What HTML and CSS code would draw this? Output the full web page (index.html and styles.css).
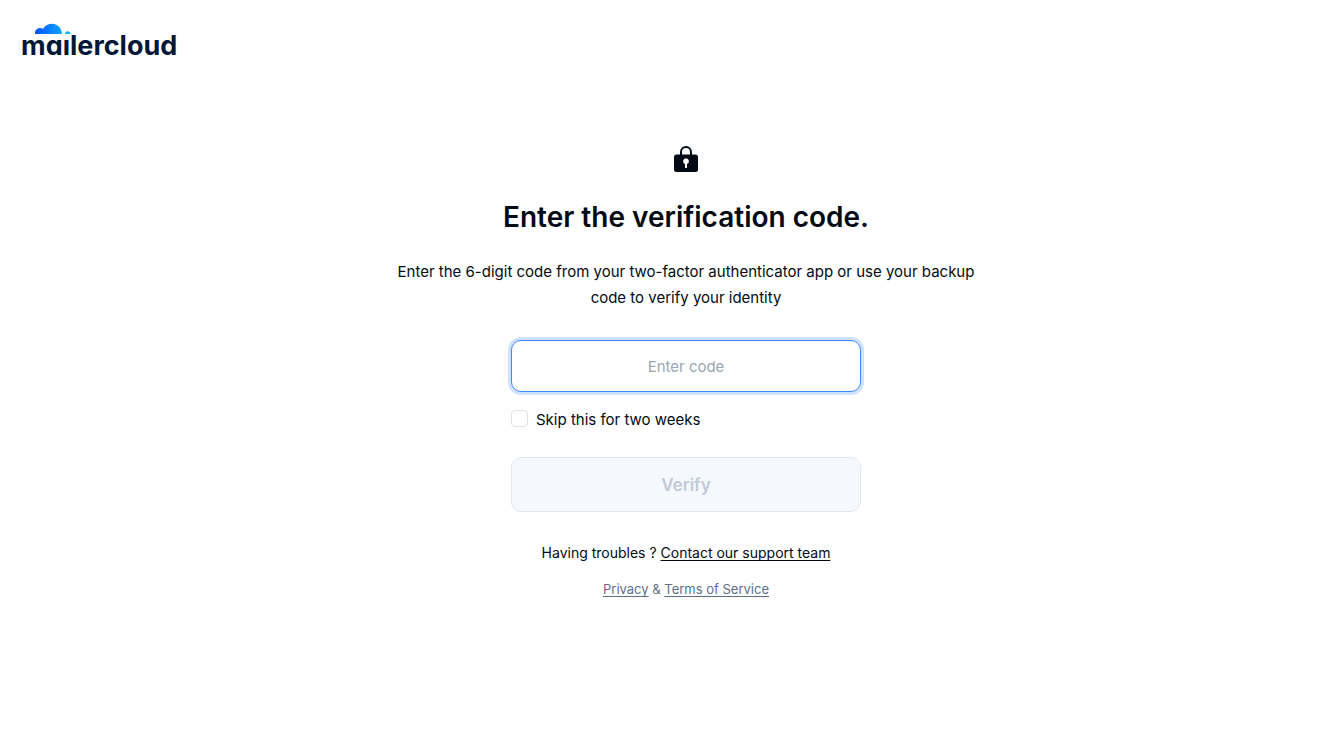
FILE: index.html
```html
<!DOCTYPE html>
<html lang="en">
<head>
<meta charset="utf-8">
<meta name="viewport" content="width=device-width, initial-scale=1">
<title>Mailercloud</title>
<link rel="stylesheet" href="styles.css">
</head>
<body>
<header class="header">
  <a class="brand" href="#" aria-label="mailercloud">
    <svg class="brand-logo" viewBox="-6 0 170 44" role="img" aria-hidden="true">
      <defs>
        <linearGradient id="cloud" x1="0" x2="1">
          <stop offset="0" stop-color="#0653ff"/>
          <stop offset="1" stop-color="#0aa5fc"/>
        </linearGradient>
      </defs>
      <text class="brand-name" x="-1" y="35">maılercloud</text>
      <path fill="url(#cloud)" d="M13 14C12.600 10.500 15 8 18 8Q20 8 21.200 8.800C23 5.600 26.500 3.800 30 3.800C35.500 3.800 39.500 8 40 14Z"/>
      <path fill="#16b7f6" d="M43 14a2.700 2.700 0 0 1 5.400 0z"/>
    </svg>
  </a>
</header>
<main class="main">
  <form class="verify">
    <svg class="lock" viewBox="0 0 24 27" aria-hidden="true">
      <path fill="none" stroke="#020b14" stroke-width="2" d="M7 9V6a5 5 0 0 1 10 0v3"/>
      <rect y="8.500" width="24" height="17.500" rx="2.500" fill="#020b14"/>
      <path fill="#fff" d="M12 12.200a3 3 0 0 1 1 5.800V22h-2v-4a3 3 0 0 1 1-5.800z"/>
    </svg>
    <h1 class="title">Enter the verification code.</h1>
    <p class="intro">Enter the 6-digit code from your two-factor authenticator app or use your backup code to verify your identity</p>
    <div class="fields">
      <input class="code" type="text" placeholder="Enter code" aria-label="Enter code" autofocus>
      <label class="skip"><input class="skip-box" type="checkbox">Skip this for two weeks</label>
      <button class="submit" type="submit" disabled>Verify</button>
    </div>
    <p class="support">Having troubles ? <a class="link" href="#">Contact our support team</a></p>
    <p class="legal"><a class="link" href="#">Privacy</a> &amp; <a class="link" href="#">Terms of Service</a></p>
  </form>
</main>
</body>
</html>
```
FILE: styles.css
```css
* { box-sizing: border-box; }
body {
  margin: 0;
  background: #fff;
  color: #020b14;
  font-family: Inter, "Liberation Sans", sans-serif;
  font-size: 15px;
}
.header { padding: 20px 16px; }
.brand { display: block; width: 170px; }
.brand-logo { display: block; width: 100%; }
.brand-name {
  font-size: 27px;
  font-weight: 700;
  font-feature-settings: "cv11";
  fill: #001737;
}
.main {
  display: flex;
  justify-content: center;
  padding: 62px 0 40px 40px;
}
.verify {
  display: flex;
  flex-direction: column;
  align-items: center;
  width: 100%;
  max-width: 600px;
  text-align: center;
}
.lock { width: 24px; height: 27px; }
.title { margin: 26px 0 24px; font-size: 28px; font-weight: 600; line-height: 36px; }
.intro { margin: 0 0 29px; line-height: 26px; }
.fields { display: flex; flex-direction: column; width: 100%; max-width: 350px; }
.code {
  width: 100%;
  padding: 15px 20px 13px;
  border: 1px solid #3d8bfd;
  border-radius: 10px;
  box-shadow: 0 0 0 3px #cfe2ff;
  color: inherit;
  font: inherit;
  line-height: 22px;
  text-align: center;
  caret-color: transparent;
  outline: none;
}
.code::placeholder { color: #98a6b3; opacity: 1; }
.skip { display: flex; align-items: center; gap: 8px; margin: 16px 0 26px; line-height: 23px; }
.skip-box {
  appearance: none;
  width: 17px;
  height: 17px;
  margin: 0 0 2px;
  border: 1px solid #dee0e8;
  border-radius: 4px;
  background: #fff;
}
.submit {
  padding: 16px 15px 14px;
  border: 1px solid #e2e8f2;
  border-radius: 10px;
  background: #f5f8fd;
  color: #c2cad6;
  font-family: inherit;
  font-size: 17px;
  font-weight: 600;
  line-height: 23px;
}
.support { margin: 30px 0 15px; font-size: 14px; line-height: 22px; }
.legal { margin: 0; color: #5c6f8a; font-size: 13px; line-height: 20px; }
.link {
  color: inherit;
  text-decoration: underline 1px;
  text-decoration-skip-ink: none;
  text-underline-offset: 2px;
}
```
